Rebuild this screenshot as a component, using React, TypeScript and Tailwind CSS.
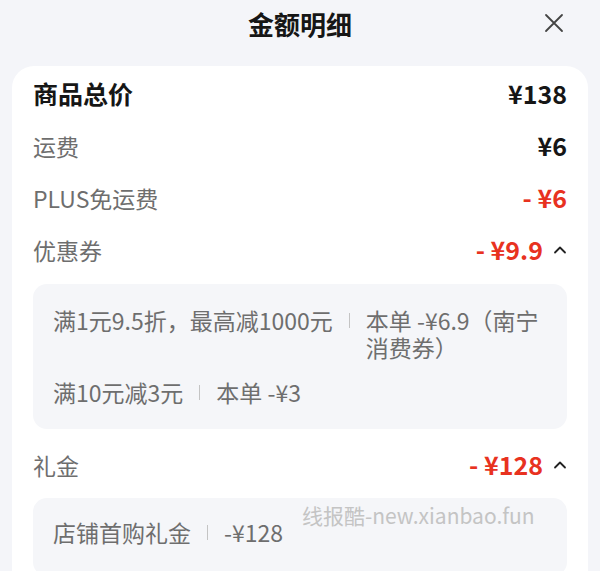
import React from "react";

const Sep = () => (
  <span className="flex h-[27px] shrink-0 items-center px-[16px]">
    <span className="block h-[15px] w-px bg-[#c4c4c4]" />
  </span>
);

const Chevron = () => (
  <svg width="14" height="10" viewBox="0 0 14 10" className="ml-[10px]">
    <polyline points="2,7.5 7,2.5 12,7.5" fill="none" stroke="#222" strokeWidth="1.8" strokeLinecap="round" strokeLinejoin="round" />
  </svg>
);

export default function App() {
  return (
    <div className="relative h-[571px] w-[600px] overflow-hidden bg-[#f4f5f9] font-['Noto_Sans_CJK_SC','Noto_Sans',sans-serif]">
      <div className="relative flex h-[48px] items-center justify-center">
        <span className="text-[26px] font-bold leading-none text-[#161616]">金额明细</span>
        <svg width="20" height="20" viewBox="0 0 20 20" className="absolute right-[36px] top-[13px]">
          <path d="M2 2 L18 18 M18 2 L2 18" stroke="#444" strokeWidth="1.8" strokeLinecap="round" />
        </svg>
      </div>
      <div className="mx-[12px] mt-[18px] rounded-t-[22px] bg-white px-[21px] pt-[2px] pb-[20px]">
        <div className="flex h-[52px] items-center justify-between">
          <span className="text-[25px] font-bold text-[#161616]">商品总价</span>
          <span className="text-[25px] font-bold text-[#161616]">¥138</span>
        </div>
        <div className="flex h-[52px] items-center justify-between">
          <span className="text-[23px] text-[#6e6e6e]">运费</span>
          <span className="text-[25px] font-bold text-[#161616]">¥6</span>
        </div>
        <div className="flex h-[52px] items-center justify-between">
          <span className="text-[23px] text-[#6e6e6e]">PLUS免运费</span>
          <span className="text-[25px] font-bold text-[#e8321f]">-&nbsp;¥6</span>
        </div>
        <div className="flex h-[52px] items-center justify-between">
          <span className="text-[23px] text-[#6e6e6e]">优惠券</span>
          <span className="flex items-center">
            <span className="text-[25px] font-bold text-[#e8321f]">-&nbsp;¥9.9</span>
            <Chevron />
          </span>
        </div>
        <div className="mt-[8px] flex flex-col gap-[18px] rounded-[14px] bg-[#f5f6f9] px-[20px] py-[23px] text-[23px] leading-[27px] text-[#6e6e6e]">
          <div className="flex">
            <span className="shrink-0">满1元9.5折，最高减1000元</span>
            <Sep />
            <span className="min-w-0 flex-1">本单 -¥6.9（南宁消费券）</span>
          </div>
          <div className="flex">
            <span className="shrink-0">满10元减3元</span>
            <Sep />
            <span className="min-w-0 flex-1">本单 -¥3</span>
          </div>
        </div>
        <div className="mt-[10px] flex h-[52px] items-center justify-between">
          <span className="text-[23px] text-[#6e6e6e]">礼金</span>
          <span className="flex items-center">
            <span className="text-[25px] font-bold text-[#e8321f]">-&nbsp;¥128</span>
            <Chevron />
          </span>
        </div>
        <div className="relative mt-[7px] flex rounded-[14px] bg-[#f5f6f9] px-[20px] pt-[21px] pb-[30px] text-[23px] leading-[27px] text-[#6e6e6e]">
          <span className="shrink-0">店铺首购礼金</span>
          <Sep />
          <span>-¥128</span>
          <span className="absolute left-[269px] top-[4px] text-[21px] leading-[27px] text-[#c4c4c4]">线报酷-new.xianbao.fun</span>
        </div>
      </div>
    </div>
  );
}
